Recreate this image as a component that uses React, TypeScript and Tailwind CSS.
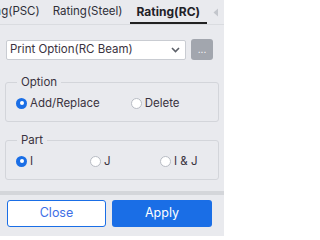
import React from "react";

function Radio({ checked, label }: { checked?: boolean; label: string }) {
  return (
    <div className="flex items-center gap-[3px]">
      {checked ? (
        <span className="w-[11px] h-[11px] rounded-full bg-[#1a6ee6] flex items-center justify-center">
          <span className="w-[4px] h-[4px] rounded-full bg-white" />
        </span>
      ) : (
        <span className="w-[11px] h-[11px] rounded-full bg-white border border-[#b8bcc4]" />
      )}
      <span className="text-[11.5px] leading-[14px] text-[#3a3340]">{label}</span>
    </div>
  );
}

function Group({ title, children }: { title: string; children: React.ReactNode }) {
  return (
    <fieldset className="h-[47px] border border-[#d3d5da] rounded-[3px] mx-[5px] px-[10px] pt-[7px]">
      <legend className="px-[4px] ml-[1px] text-[11.5px] leading-[14px] text-[#3a3340]">{title}</legend>
      {children}
    </fieldset>
  );
}

export default function App() {
  return (
    <div
      className="w-[224px] h-[236px] bg-[#e9eaee] overflow-hidden flex flex-col"
      style={{ fontFamily: "Inter, 'Noto Sans', sans-serif" }}
    >
      <div className="h-[25px] flex items-end border-b border-[#dadce0] relative">
        <div className="flex items-end h-full overflow-hidden">
          <div className="ml-[-32px] px-[6px] h-full flex items-center text-[11.5px] text-[#2f2f38] whitespace-nowrap">
            Rating(PSC)
          </div>
          <div className="px-[7px] h-full flex items-center text-[11.5px] text-[#2f2f38] whitespace-nowrap">
            Rating(Steel)
          </div>
          <div className="px-[7px] h-full flex items-center text-[12px] font-bold text-[#1f2127] whitespace-nowrap border-b-2 border-[#222] pt-[2px]">
            Rating(RC)
          </div>
        </div>
        <div className="flex-1 h-full flex items-center justify-center">
          <svg width="6" height="9" viewBox="0 0 6 9">
            <path d="M5 0.5 L0.5 4.5 L5 8.5 Z" fill="#c3c6cc" />
          </svg>
        </div>
      </div>

      <div className="flex items-center mt-[14px] ml-[6px] gap-[5px]">
        <div className="w-[180px] h-[20px] bg-white border border-[#c9ccd2] rounded-[2px] flex items-center justify-between pl-[3px] pr-[5px]">
          <span className="text-[11.5px] text-[#3a3340] whitespace-nowrap">Print Option(RC Beam)</span>
          <svg width="9" height="6" viewBox="0 0 9 6">
            <path d="M1 1 L4.5 4.5 L8 1" stroke="#5c6068" strokeWidth="1.6" fill="none" />
          </svg>
        </div>
        <div className="w-[22px] h-[21px] bg-[#a2a6ae] rounded-[3px] flex items-center justify-center text-white text-[10px] leading-none pb-[2px]">
          ...
        </div>
      </div>

      <div className="mt-[15px]">
        <Group title="Option">
          <div className="flex items-center gap-[31px]">
            <Radio checked label="Add/Replace" />
            <Radio label="Delete" />
          </div>
        </Group>
      </div>

      <div className="mt-[11px]">
        <Group title="Part">
          <div className="flex items-center">
            <div className="w-[74px]"><Radio checked label="I" /></div>
            <div className="w-[70px]"><Radio label="J" /></div>
            <Radio label="I & J" />
          </div>
        </Group>
      </div>

      <div className="mt-[11px] h-[4px] bg-[#d4d6da]" />

      <div className="flex gap-[6px] px-[7px] mt-[5px]">
        <button className="w-[99px] h-[27px] bg-white border border-[#1a6ee6] rounded-[3px] text-[12.5px] text-[#3f6fe6]">
          Close
        </button>
        <button className="w-[100px] h-[27px] bg-[#1a6ee6] rounded-[3px] text-[12.5px] text-white">
          Apply
        </button>
      </div>
    </div>
  );
}
